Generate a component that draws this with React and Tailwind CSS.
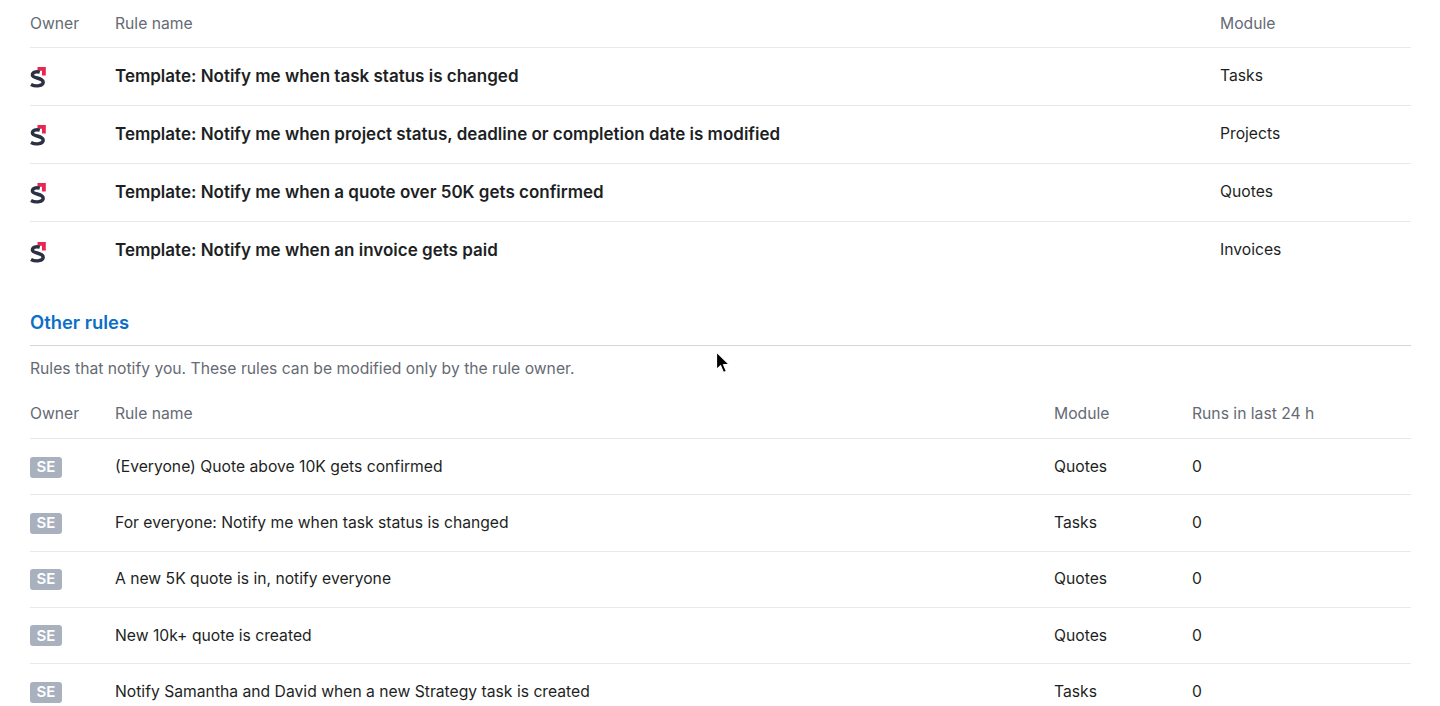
const templates = [
  { name: 'Template: Notify me when task status is changed', module: 'Tasks' },
  { name: 'Template: Notify me when project status, deadline or completion date is modified', module: 'Projects' },
  { name: 'Template: Notify me when a quote over 50K gets confirmed', module: 'Quotes' },
  { name: 'Template: Notify me when an invoice gets paid', module: 'Invoices' },
];

const others = [
  { name: '(Everyone) Quote above 10K gets confirmed', module: 'Quotes' },
  { name: 'For everyone: Notify me when task status is changed', module: 'Tasks' },
  { name: 'A new 5K quote is in, notify everyone', module: 'Quotes' },
  { name: 'New 10k+ quote is created', module: 'Quotes' },
  { name: 'Notify Samantha and David when a new Strategy task is created', module: 'Tasks' },
];

function Logo() {
  return (
    <svg className="block" width="16" height="21" viewBox="0 0 16 21" fill="none">
      <path d="M7.5 0H15.8V8.5H12V3.8H7.5Z" fill="#e8264f" />
      <path
        d="M9.8 5.2C6 4.2 2.4 5.2 2.4 8C2.4 11.6 13.2 10.4 13.2 15.2C13.2 18.8 6 20.2 1 17.4"
        stroke="#2a3142"
        strokeWidth="3.4"
      />
    </svg>
  );
}

function Cursor() {
  return (
    <svg className="absolute left-[714px] top-[350px]" width="18" height="26" viewBox="0 0 18 26">
      <path
        d="M2.5 2V19.5L6.6 15.8L9.4 22.6L12.4 21.3L9.6 14.7L15 14.3Z"
        fill="#000"
        stroke="#fff"
        strokeWidth="1.2"
      />
    </svg>
  );
}

function App() {
  return (
    <div className="relative h-[706px] overflow-hidden bg-white pl-[30px] pr-[29px] font-['Inter',sans-serif] text-[15.7px] text-[#1d1f24]">
      <div className="flex h-[48px] items-center border-b border-[#e6e8eb] text-[#656a73]">
        <div className="w-[85px]">Owner</div>
        <div className="flex-1">Rule name</div>
        <div className="w-[191px]">Module</div>
      </div>

      {templates.map((t, i) => (
        <div
          key={t.name}
          className={i < 3 ? 'flex h-[58px] items-center border-b border-[#e6e8eb]' : 'flex h-[58px] items-center'}
        >
          <div className="w-[85px] pt-[2px]">
            <Logo />
          </div>
          <div className="flex-1 text-[17px] font-semibold">{t.name}</div>
          <div className="mb-[2px] w-[191px]">{t.module}</div>
        </div>
      ))}

      <h2 className="mt-[23px] flex h-[43px] items-center border-b border-[#d3d6da] pb-[2px] text-[18.4px] font-semibold text-[#0b6fc7]">
        Other rules
      </h2>
      <p className="mt-[11px] h-[24px] leading-[24px] text-[#656a73]">
        Rules that notify you. These rules can be modified only by the rule owner.
      </p>

      <div className="mt-[7px] flex h-[51px] items-center border-b border-[#e6e8eb] pt-[2px] text-[#656a73]">
        <div className="w-[85px]">Owner</div>
        <div className="flex-1">Rule name</div>
        <div className="w-[138px]">Module</div>
        <div className="w-[219px]">Runs in last 24 h</div>
      </div>

      {others.map((r, i) => (
        <div
          key={r.name}
          className={i < 4 ? 'flex h-[56.25px] items-center border-b border-[#e6e8eb]' : 'flex h-[56.25px] items-center'}
        >
          <div className="w-[85px] pt-[1px]">
            <span className="flex h-[21px] w-[32px] items-center justify-center rounded-[3px] bg-[#a9b1bf] text-[15px] font-semibold text-white">
              SE
            </span>
          </div>
          <div className="flex-1">{r.name}</div>
          <div className="w-[138px]">{r.module}</div>
          <div className="w-[219px]">0</div>
        </div>
      ))}

      <Cursor />
    </div>
  );
}

export default App;
